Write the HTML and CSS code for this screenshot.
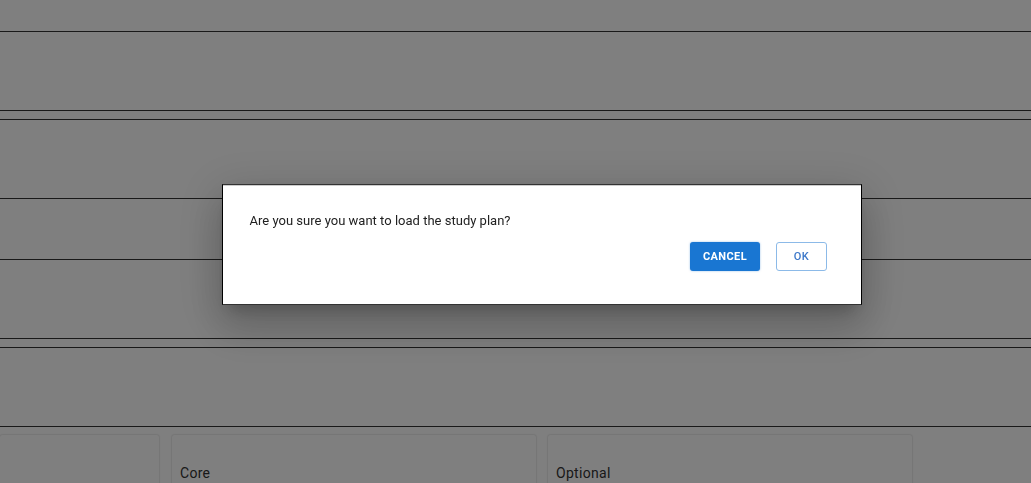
FILE: index.html
```
<!DOCTYPE html>
<html lang="en">
<head>
<meta charset="utf-8">
<title>Study plan</title>
<link rel="stylesheet" href="styles.css">
</head>
<body>
<main class="page">
  <section class="row"></section>
  <section class="row"></section>
  <section class="row row-spaced"></section>
  <section class="row"></section>
  <div class="cards">
    <article class="card card-first"></article>
    <article class="card"><h2 class="card-title">Core</h2></article>
    <article class="card"><h2 class="card-title">Optional</h2></article>
  </div>
</main>
<div class="backdrop">
  <div class="dialog" role="dialog" aria-modal="true">
    <p class="message">Are you sure you want to load the study plan?</p>
    <div class="actions">
      <button class="btn btn-primary">CANCEL</button>
      <button class="btn btn-outline">OK</button>
    </div>
  </div>
</div>
</body>
</html>
```
FILE: styles.css
```
* { box-sizing: border-box; }
body {
  margin: 0;
  height: 483px;
  overflow: hidden;
  background: #fff;
  font-family: Roboto, "Liberation Sans", sans-serif;
}
.page {
  display: flex;
  flex-direction: column;
  gap: 8px;
  height: 483px;
  padding-top: 31px;
  overflow: hidden;
}
.row {
  flex: none;
  height: 80px;
  border-top: 1px solid #333;
  border-bottom: 1px solid #333;
}
.row-spaced { margin-top: 52px; }
.cards {
  display: flex;
  flex: none;
  gap: 12px;
}
.card {
  flex: none;
  width: 364px;
  height: 120px;
  padding: 28px 8px;
  border-radius: 2px;
  background: #fff;
  box-shadow: 0 0 2px rgba(0, 0, 0, .28);
}
.card-first {
  width: 159px;
  margin-right: 1px;
}
.card-title {
  margin: 0;
  font-size: 14px;
  line-height: 20px;
  font-weight: 400;
  letter-spacing: .3px;
  color: #333;
}
.backdrop {
  position: fixed;
  inset: 0;
  padding: 184px 0 0 222px;
  background: rgba(0, 0, 0, .5);
}
.dialog {
  width: 640px;
  height: 121px;
  padding: 26px 34px 0 26.5px;
  border: 1px solid #000;
  border-top-color: #333;
  border-bottom-color: #333;
  background: #fff;
  box-shadow: inset 0 1px #ccc, 0 11px 15px -7px rgba(0, 0, 0, .2), 0 24px 38px 3px rgba(0, 0, 0, .14), 0 9px 46px 8px rgba(0, 0, 0, .12);
}
.message {
  margin: 0;
  font-size: 13px;
  line-height: 20px;
  letter-spacing: .01px;
  color: #212121;
}
.actions {
  display: flex;
  justify-content: flex-end;
  gap: 16px;
  margin-top: 11px;
}
.btn {
  height: 29px;
  padding: 0;
  border-radius: 3px;
  font-family: inherit;
  font-size: 11px;
  line-height: 27px;
  letter-spacing: .4px;
}
.btn-primary {
  width: 70px;
  border: 0;
  background: #1976d2;
  color: #fff;
  font-weight: 700;
  box-shadow: 0 0 2px rgba(25, 118, 210, .5);
}
.btn-outline {
  width: 51px;
  border: 1px solid #8cbae8;
  background: #fff;
  color: #3d78c9;
  font-weight: 500;
}
```
